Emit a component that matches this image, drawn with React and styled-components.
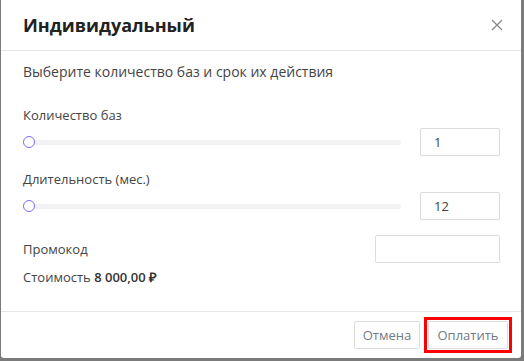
import styled, { createGlobalStyle } from "styled-components";

const GlobalStyle = createGlobalStyle`
  html, body {
    margin: 0;
    padding: 0;
    background: #7b7b7b;
    font-family: "Open Sans", "Liberation Sans", sans-serif;
  }
`;

const Backdrop = styled.div`
  width: 524px;
  height: 361px;
  background: #7b7b7b;
  overflow: hidden;
`;

const Modal = styled.div`
  margin-left: 1px;
  width: 520px;
  height: 358px;
  background: #fff;
  border-radius: 0 0 3px 3px;
  display: flex;
  flex-direction: column;
`;

const Header = styled.div`
  height: 51px;
  box-sizing: border-box;
  display: flex;
  align-items: center;
  justify-content: space-between;
  padding: 0 16px 0 22px;
  border-bottom: 1px solid #e6e6e6;
`;

const Title = styled.h2`
  margin: 0;
  font-size: 18px;
  font-weight: 700;
  color: #222;
`;

const Close = styled.button`
  border: 0;
  background: none;
  padding: 0;
  width: 16px;
  height: 16px;
  display: flex;
  align-items: center;
  justify-content: center;
  cursor: pointer;
`;

const Body = styled.div`
  flex: 1;
  padding: 11px 21px 0 22px;
  border-bottom: 1px solid #e6e6e6;
`;

const Lead = styled.p`
  margin: 0 0 24px;
  font-size: 14px;
  color: #444;
  line-height: 20px;
`;

const Label = styled.div`
  font-size: 13px;
  color: #444;
  line-height: 18px;
`;

const Field = styled.div`
  margin-bottom: ${({ $gap }) => $gap || 0}px;
`;

const SliderRow = styled.div`
  display: flex;
  align-items: center;
  justify-content: space-between;
  margin-top: ${({ $top }) => $top}px;
`;

const Track = styled.div`
  position: relative;
  width: 372px;
  height: 5px;
  margin-left: 6px;
  background: #f2f2f2;
  border-radius: 2px;
`;

const Thumb = styled.span`
  position: absolute;
  left: -6px;
  top: -4px;
  width: 10px;
  height: 10px;
  border: 1.5px solid #7a6ff7;
  border-radius: 50%;
  background: #fff;
`;

const Input = styled.div`
  box-sizing: border-box;
  width: ${({ $w }) => $w}px;
  height: 28px;
  border: 1px solid #dcdcdc;
  border-radius: 2px;
  padding: 0 13px;
  font-size: 13px;
  color: #444;
  line-height: 26px;
`;

const PromoRow = styled.div`
  display: flex;
  align-items: center;
  justify-content: space-between;
  margin-top: 15px;
`;

const Price = styled.div`
  margin-top: 5px;
  font-size: 13px;
  color: #444;
  line-height: 18px;

  & b {
    font-weight: 600;
    color: #333;
  }
`;

const Footer = styled.div`
  height: 46px;
  display: flex;
  align-items: center;
  justify-content: flex-end;
  gap: 4px;
  padding: 0 9px 0 0;
`;

const Highlight = styled.div`
  border: 3px solid #f00;
  padding: 1px;
  display: flex;
`;

const Button = styled.button`
  box-sizing: border-box;
  width: ${({ $w }) => $w}px;
  height: 28px;
  padding: 0;
  border: 1px solid #dcdcdc;
  border-radius: 2px;
  background: #fff;
  color: #707a86;
  font-family: inherit;
  font-size: 13px;
  cursor: pointer;
`;

const CloseIcon = () => (
  <svg width="12" height="12" viewBox="0 0 12 12">
    <path d="M1 1L11 11M11 1L1 11" stroke="#8a8a8a" strokeWidth="1.3" />
  </svg>
);

export default function App() {
  return (
    <>
      <GlobalStyle />
      <Backdrop>
        <Modal>
          <Header>
            <Title>Индивидуальный</Title>
            <Close aria-label="close">
              <CloseIcon />
            </Close>
          </Header>
          <Body>
            <Lead>Выберите количество баз и срок их действия</Lead>
            <Field $gap={14}>
              <Label>Количество баз</Label>
              <SliderRow $top={4}>
                <Track>
                  <Thumb />
                </Track>
                <Input $w={80}>1</Input>
              </SliderRow>
            </Field>
            <Field>
              <Label>Длительность (мес.)</Label>
              <SliderRow $top={4}>
                <Track>
                  <Thumb />
                </Track>
                <Input $w={80}>12</Input>
              </SliderRow>
            </Field>
            <PromoRow>
              <Label>Промокод</Label>
              <Input $w={125} />
            </PromoRow>
            <Price>
              Стоимость <b>8 000,00 ₽</b>
            </Price>
          </Body>
          <Footer>
            <Button $w={66}>Отмена</Button>
            <Highlight>
              <Button $w={80}>Оплатить</Button>
            </Highlight>
          </Footer>
        </Modal>
      </Backdrop>
    </>
  );
}
